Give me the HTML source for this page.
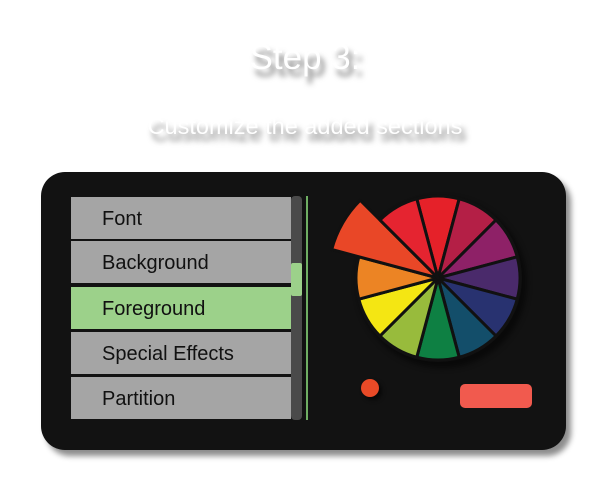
<!DOCTYPE html>
<html><head><meta charset="utf-8"><style>
html,body{margin:0;padding:0;background:#fff;width:610px;height:489px;overflow:hidden;font-family:"Liberation Sans",Arial,sans-serif;position:relative}
.t{position:absolute;left:0;width:610px;text-align:center;color:#fff;text-shadow:4px 7px 6px rgba(0,0,0,.5)}
#panel{position:absolute;left:41px;top:172px;width:525px;height:278px;background:#121212;border-radius:24px;box-shadow:5px 6px 6px rgba(0,0,0,.45)}
.row{position:absolute;left:71px;width:220px;height:42px;background:#a5a5a5;font-size:20px;color:#111;line-height:44px;box-sizing:border-box;padding-left:31px}
</style></head><body>
<div class="t" style="top:38px;font-size:35px">Step 3:</div>
<div class="t" style="top:113px;font-size:23.5px">Customize the added sections</div>
<div id="panel"></div>
<div class="row" style="top:197px">Font</div>
<div class="row" style="top:241px">Background</div>
<div class="row" style="top:287px;background:#9cd18a">Foreground</div>
<div class="row" style="top:332px">Special Effects</div>
<div class="row" style="top:377px">Partition</div>
<div style="position:absolute;left:291px;top:196px;width:11px;height:224px;background:#4a4a4a;border-radius:4px"></div>
<div style="position:absolute;left:291px;top:263px;width:11px;height:33px;background:#9cd18a;border-radius:2px"></div>
<div style="position:absolute;left:306px;top:196px;width:2px;height:224px;background:#6fae63"></div>
<svg id="w" style="position:absolute;left:0;top:0" width="610" height="489"></svg>
<div style="position:absolute;left:361px;top:379px;width:18px;height:18px;border-radius:50%;background:#e84a27;box-shadow:3px 3px 4px rgba(0,0,0,.6)"></div>
<div style="position:absolute;left:460px;top:384px;width:72px;height:24px;border-radius:5px;background:#f15a4e"></div>
<script>
var cx=438,cy=278,r=82,cols=["#e52129","#b41f46","#8e2167","#4a2a6b","#283270","#134e6a","#0e8043","#98bb3c","#f4e613","#ec8424","#e94727","#e52430"];
var s='<circle cx="'+(cx+4)+'" cy="'+(cy+5)+'" r="'+(r+3)+'" fill="rgba(0,0,0,0.5)" style="filter:blur(3px)"/><circle cx="'+cx+'" cy="'+cy+'" r="'+(r+2)+'" fill="#111"/>';
for(var i=0;i<12;i++){var c=-90+30*i,a1=(c-15)*Math.PI/180,a2=(c+15)*Math.PI/180,R=(i==10?110:r);
s+='<path d="M'+cx+' '+cy+' L'+(cx+R*Math.cos(a1)).toFixed(1)+' '+(cy+R*Math.sin(a1)).toFixed(1)+' A'+R+' '+R+' 0 0 1 '+(cx+R*Math.cos(a2)).toFixed(1)+' '+(cy+R*Math.sin(a2)).toFixed(1)+' Z" fill="'+cols[i]+'" stroke="#111" stroke-width="3" stroke-linejoin="round"/>';}
document.getElementById('w').innerHTML=s;
</script>
</body></html>
